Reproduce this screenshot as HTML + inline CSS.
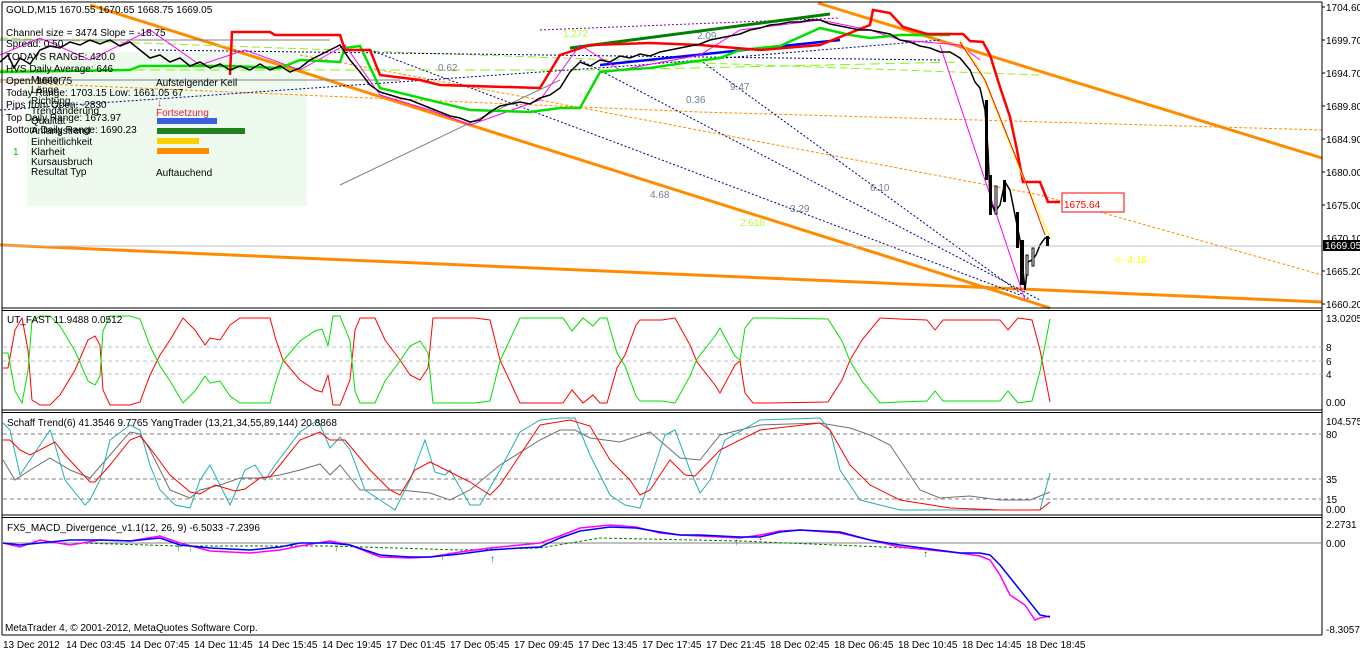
<!DOCTYPE html>
<html><head><meta charset="utf-8"><style>
body{margin:0;background:#fff;width:1360px;height:652px;overflow:hidden;font-family:"Liberation Sans",sans-serif}
svg text{font-family:"Liberation Sans",sans-serif;font-size:10px}
</style></head><body>
<svg width="1360" height="652" viewBox="0 0 1360 652" xmlns="http://www.w3.org/2000/svg">
<rect width="1360" height="652" fill="#fff"/>
<rect x="27" y="52" width="280" height="154" fill="#effaef"/>
<g fill="none">
<polyline points="0,82 300,95 700,112 1322,130" stroke="#ff8c00" stroke-dasharray="3,2" stroke-width="1"/>
<polyline points="300,55 540,100 1040,195 1322,275" stroke="#ff8c00" stroke-dasharray="3,2" stroke-width="1"/>
<polyline points="0,245 1322,302" stroke="#ff8c00" stroke-width="3"/>
<polyline points="90,5 1050,308" stroke="#ff8c00" stroke-width="3"/>
<polyline points="818,3 1322,158" stroke="#ff8c00" stroke-width="3"/>
<polyline points="0,38 1040,75" stroke="#90ee20" stroke-dasharray="8,4" stroke-width="1"/>
<polyline points="0,70 600,70 960,62" stroke="#7cfc00" stroke-dasharray="10,5" stroke-width="1"/>
<polyline points="0,40 330,40" stroke="#808080"/>
<polyline points="0,80 400,80" stroke="#808080"/>
<polyline points="540,30 840,18" stroke="#800080" stroke-dasharray="2,2"/>
<polyline points="570,48 830,14" stroke="#008000" stroke-width="3"/>
<polyline points="600,65 840,40" stroke="#0000ff" stroke-width="2.5"/>
<polyline points="370,50 1020,295" stroke="#000080" stroke-dasharray="2,2"/>
<polyline points="580,60 1040,300" stroke="#000080" stroke-dasharray="2,2"/>
<polyline points="700,60 1030,300" stroke="#000080" stroke-dasharray="2,2"/>
<polyline points="0,110 640,65 940,40" stroke="#000080" stroke-dasharray="2,2"/>
<polyline points="150,50 940,60" stroke="#000080" stroke-dasharray="2,2"/>
<polyline points="340,185 560,80" stroke="#808080"/>
<polyline points="940,45 1025,300" stroke="#ff00ff"/>
<polyline points="0,55 40,38 90,60 150,30 200,65 245,50 300,70 345,45 380,95 430,110 470,125 540,100 580,45 620,70 700,55 740,30 820,20 870,30 900,40 960,45 980,60" stroke="#ff00ff"/>
<polyline points="0,72 130,70 140,66 230,66 280,68 300,60 340,62 345,48 360,46 380,88 470,110 530,112 560,108 580,108 600,72 620,70 650,68 690,62 720,58 740,50 780,46 820,28 850,35 870,38 900,35 950,35" stroke="#00e000" stroke-width="2.5"/>
<polyline points="230,75 232,32 270,32 275,35 340,35 345,50 370,50 380,75 420,80 440,85 540,88 560,55 590,45 650,43 700,45 760,50 820,45 870,25 873,10 890,13 903,27 927,34 963,34 970,41 983,42 990,55 1000,87 1010,117 1017,150 1023,182 1040,182 1048,202 1060,202" stroke="#ff0000" stroke-width="2.5"/>
<polyline points="960,40 980,70 1000,120 1020,170 1040,215 1050,237" stroke="#ffff00"/>
<polyline points="960,42 985,80 1005,130 1025,180 1045,235" stroke="#ff0000"/>
<polyline points="0,62 8,55 14,68 20,58 30,64 40,50 50,46 60,48 70,42 80,45 90,40 100,44 110,40 120,46 130,42 140,50 150,58 160,55 170,62 180,58 190,66 200,62 210,68 220,64 230,70 240,66 250,70 260,64 270,70 280,66 290,72 300,68 310,60 320,55 330,50 340,45 350,60 360,72 370,85 380,92 390,95 400,98 410,100 420,104 430,108 440,112 450,116 460,118 470,122 480,120 490,112 500,106 510,104 520,102 530,104 540,98 550,95 560,88 570,72 580,62 590,66 600,60 610,62 620,56 630,58 640,54 650,56 660,52 670,50 680,48 690,46 700,44 710,40 720,38 730,36 740,34 750,30 760,28 770,25 780,24 790,22 800,22 810,20 820,20 830,24 840,26 850,28 860,30 870,30 880,32 890,34 900,40 910,42 920,46 930,48 940,52 950,52 960,58 970,70 975,82 980,88 985,110 988,150 990,200 995,212 1000,205 1005,182 1010,190 1015,215 1020,240 1025,290 1028,262 1032,260 1036,255 1040,245 1045,238 1050,238" stroke="#000" stroke-width="1.5"/>
<polyline points="0,246 1322,246" stroke="#c0c0c0"/>
</g>
<g fill="#000">
<rect x="985" y="100" width="3" height="80"/><rect x="989" y="175" width="3" height="40"/><rect x="1016" y="212" width="3" height="36"/><rect x="1020" y="240" width="4" height="45"/>
<rect x="1026" y="255" width="2" height="20" fill="#fff" stroke="#000"/><rect x="1032" y="248" width="2" height="18" fill="#fff" stroke="#000"/><rect x="1046" y="236" width="3" height="10"/>
<rect x="995" y="186" width="2" height="28" fill="#fff" stroke="#000"/><rect x="1003" y="180" width="3" height="22"/>
</g>
<g fill="#000">
<text x="6" y="13">GOLD,M15  1670.55 1670.65 1668.75 1669.05</text>
<text x="6" y="36">Channel size = 3474 Slope = -18.75</text>
<text x="6" y="47">Spread: 0.50</text>
<text x="6" y="60">TODAYS RANGE: 420.0</text>
<text x="6" y="72">HVS Daily Average: 646</text>
<text x="6" y="84">Open: 1669.75</text>
<text x="6" y="96">Today Range: 1703.15  Low: 1661.05 67</text>
<text x="6" y="108">Pips from Open: -2830</text>
<text x="6" y="121">Top Daily Range: 1673.97</text>
<text x="6" y="133">Bottom Daily Range: 1690.23</text>
<text x="31" y="83">Muster</text><text x="31" y="93">Länge</text>
<text x="31" y="104">Richtung</text><text x="31" y="114">Trendänderung</text>
<text x="31" y="124">Qualität</text><text x="31" y="134">Anfangstrend</text>
<text x="31" y="145">Einheitlichkeit</text><text x="31" y="155">Klarheit</text>
<text x="31" y="165">Kursausbruch</text><text x="31" y="175">Resultat Typ</text>
<text x="156" y="86">Aufsteigender Keil</text>
<text x="156" y="176">Auftauchend</text>
</g>
<text x="156" y="116" fill="#e0204a">Fortsetzung</text>
<text x="157" y="106" fill="#e0204a" font-size="13">↓</text>
<text x="13" y="155" fill="#00c000" font-size="12">1</text>
<g><rect x="157" y="118" width="60" height="6" fill="#3a60e0"/><rect x="157" y="128" width="88" height="6" fill="#208020"/><rect x="157" y="138" width="42" height="6" fill="#ffd000"/><rect x="157" y="148" width="52" height="6" fill="#ff8c00"/></g>
<g fill="#708090"><text x="650" y="198">4.68</text><text x="790" y="212">3.29</text><text x="870" y="191">6.10</text><text x="697" y="39">2.09</text><text x="438" y="71">0.62</text><text x="686" y="103">0.36</text><text x="730" y="90">9.47</text></g>
<text x="740" y="226" fill="#adff2f">2.618</text><text x="563" y="37" fill="#adff2f">1.272</text>
<rect x="1062" y="193" width="62" height="19" fill="#fff" stroke="#ff0000"/>
<text x="1064" y="208" fill="#ff0000" font-size="15">1675.64</text>
<text x="1115" y="263" fill="#ffff00" font-size="16">&lt;--4:16</text>
<g fill="none" stroke="#000">
<line x1="2" y1="2" x2="1322" y2="2"/><line x1="2" y1="2" x2="2" y2="635"/><line x1="1322" y1="2" x2="1322" y2="635"/>
<line x1="2" y1="308" x2="1322" y2="308"/><line x1="2" y1="310.5" x2="1322" y2="310.5"/>
<line x1="2" y1="410" x2="1322" y2="410"/><line x1="2" y1="412.5" x2="1322" y2="412.5"/>
<line x1="2" y1="515" x2="1322" y2="515"/><line x1="2" y1="517.5" x2="1322" y2="517.5"/>
<line x1="2" y1="635" x2="1322" y2="635"/>
</g>
<g fill="none" stroke="#c0c0c0" stroke-dasharray="4,3"><line x1="3" y1="347" x2="1322" y2="347"/><line x1="3" y1="361" x2="1322" y2="361"/><line x1="3" y1="374" x2="1322" y2="374"/></g>
<g fill="none">
<polyline stroke="#ff0000" points="3,368 8,368 15,330 22,318 28,350 32,400 40,405 50,405 60,395 75,370 88,340 95,336 100,345 103,390 110,405 130,405 140,402 150,375 160,355 170,340 183,318 195,330 205,345 210,338 220,340 230,325 240,318 270,318 276,340 283,360 300,380 315,390 322,392 328,375 333,405 340,405 350,380 355,330 360,318 375,318 385,340 400,360 410,375 420,380 428,368 433,318 460,318 475,318 490,320 500,360 520,403 563,403 572,390 583,403 593,395 600,403 607,403 617,368 625,355 636,325 640,320 662,320 675,318 690,345 697,362 715,385 720,393 735,365 740,361 745,393 753,403 770,403 828,402 842,380 850,360 862,340 880,318 900,319 927,320 935,330 943,320 965,320 1000,320 1008,330 1018,318 1032,320 1040,350 1050,402"/>
<polyline stroke="#00e000" transform="translate(0,721) scale(1,-1)" points="3,368 8,368 15,330 22,318 28,350 32,400 40,405 50,405 60,395 75,370 88,340 95,336 100,345 103,390 110,405 130,405 140,402 150,375 160,355 170,340 183,318 195,330 205,345 210,338 220,340 230,325 240,318 270,318 276,340 283,360 300,380 315,390 322,392 328,375 333,405 340,405 350,380 355,330 360,318 375,318 385,340 400,360 410,375 420,380 428,368 433,318 460,318 475,318 490,320 500,360 520,403 563,403 572,390 583,403 593,395 600,403 607,403 617,368 625,355 636,325 640,320 662,320 675,318 690,345 697,362 715,385 720,393 735,365 740,361 745,393 753,403 770,403 828,402 842,380 850,360 862,340 880,318 900,319 927,320 935,330 943,320 965,320 1000,320 1008,330 1018,318 1032,320 1040,350 1050,402"/>
</g>
<text x="7" y="323">UT_FAST 11.9488 0.0512</text>
<g fill="none" stroke="#808080" stroke-dasharray="4,3"><line x1="3" y1="434" x2="1322" y2="434"/><line x1="3" y1="479" x2="1322" y2="479"/><line x1="3" y1="499" x2="1322" y2="499"/></g>
<g fill="none">
<polyline stroke="#707070" points="3,460 15,480 30,470 50,458 70,470 90,478 110,455 130,432 140,434 150,450 170,490 190,498 200,490 220,485 240,478 260,478 280,475 300,470 320,464 330,475 340,465 360,490 400,490 430,493 450,500 470,490 500,465 540,440 560,430 575,430 590,438 620,442 650,432 680,458 700,460 720,435 760,425 820,423 850,428 870,435 890,445 900,460 920,490 940,498 970,496 1000,500 1030,500 1050,492"/>
<polyline stroke="#20b0b0" points="3,423 10,430 20,475 40,445 50,430 55,445 65,480 85,505 90,500 100,480 110,440 130,425 140,430 150,465 160,490 175,505 190,508 200,480 210,465 230,505 245,470 255,465 265,480 275,465 300,432 318,420 330,448 340,437 350,450 365,490 395,510 410,480 425,440 435,472 445,475 450,470 470,505 480,505 500,470 520,432 540,420 560,418 575,418 590,455 610,495 625,505 640,508 650,480 665,435 675,430 690,470 700,493 710,480 725,440 760,420 820,418 830,430 840,470 860,500 900,510 1000,510 1040,510 1050,473"/>
<polyline stroke="#ff0000" points="3,440 10,440 20,450 30,455 55,442 65,455 90,482 95,482 110,465 130,440 140,436 150,448 170,475 190,492 200,494 215,485 235,491 245,489 260,478 270,477 280,465 300,440 320,432 330,440 345,440 370,470 390,490 400,495 415,470 430,462 450,472 470,482 490,495 500,485 520,455 540,425 570,420 590,426 610,460 630,480 640,495 650,490 670,460 685,475 695,476 720,450 760,430 820,423 830,430 850,465 870,485 900,500 950,508 1000,510 1040,510 1050,502"/>
</g>
<text x="7" y="426">Schaff Trend(6) 41.3546 9.7765  YangTrader (13,21,34,55,89,144) 20.8868</text>
<line x1="3" y1="543" x2="1322" y2="543" stroke="#808080"/>
<g fill="none">
<polyline stroke="#008000" stroke-dasharray="3,2" points="80,543 180,546 330,546 460,550 540,548 600,538 740,541 930,549"/>
<polyline stroke="#ff00ff" stroke-width="1.5" points="3,543 20,547 40,540 70,545 100,540 130,541 160,536 180,543 210,551 250,553 280,550 300,546 330,541 350,545 380,557 410,558 430,557 460,552 490,548 520,545 540,543 560,536 580,528 610,525 636,527 660,533 680,535 700,536 740,538 760,535 780,531 800,530 840,533 870,540 900,547 930,550 960,553 980,556 990,560 1000,575 1010,595 1025,605 1035,620 1040,618 1050,616"/>
<polyline stroke="#0000ff" stroke-width="1.5" points="3,543 20,545 40,543 70,540 100,540 130,541 160,538 180,545 210,548 250,550 280,547 300,543 330,543 350,545 380,555 410,557 430,557 460,554 490,550 520,548 540,547 560,538 580,531 610,527 636,528 660,532 680,535 700,535 740,537 760,537 780,532 800,530 840,532 870,540 900,545 930,549 960,553 980,553 990,555 1000,565 1020,590 1040,615 1050,617"/>
</g>
<g fill="#008000" font-size="11" font-weight="bold"><text x="176" y="551">↑</text><text x="188" y="551">↑</text><text x="334" y="551">↑</text><text x="440" y="560">↑</text><text x="490" y="562">↑</text><text x="734" y="545">↑</text><text x="923" y="557">↑</text></g>
<text x="758" y="540" fill="#ff0000" font-size="11" font-weight="bold">↓</text>
<text x="7" y="531">FX5_MACD_Divergence_v1.1(12, 26, 9) -6.5033 -7.2396</text>
<text x="5" y="631" font-size="11">MetaTrader 4, © 2001-2012, MetaQuotes Software Corp.</text>
<g fill="#000">
<text x="1326" y="11">1704.60</text><text x="1326" y="44">1699.70</text><text x="1326" y="77">1694.70</text><text x="1326" y="110">1689.80</text><text x="1326" y="143">1684.90</text><text x="1326" y="176">1680.00</text><text x="1326" y="209">1675.00</text><text x="1326" y="242">1670.10</text><text x="1326" y="275">1665.20</text><text x="1326" y="308">1660.20</text>
<text x="1326" y="322">13.0205</text><text x="1326" y="351">8</text><text x="1326" y="365">6</text><text x="1326" y="378">4</text><text x="1326" y="406">0.00</text>
<text x="1326" y="425">104.5758</text><text x="1326" y="438">80</text><text x="1326" y="483">35</text><text x="1326" y="503">15</text><text x="1326" y="513">0.00</text>
<text x="1326" y="528">2.2731</text><text x="1326" y="547">0.00</text><text x="1326" y="633">-8.3057</text>
</g>
<rect x="1323" y="240" width="37" height="11" fill="#000"/><text x="1325" y="249" fill="#fff">1669.05</text>
<g stroke="#000"><line x1="1322" y1="7" x2="1325" y2="7"/><line x1="1322" y1="40" x2="1325" y2="40"/><line x1="1322" y1="73" x2="1325" y2="73"/><line x1="1322" y1="106" x2="1325" y2="106"/><line x1="1322" y1="139" x2="1325" y2="139"/><line x1="1322" y1="172" x2="1325" y2="172"/><line x1="1322" y1="205" x2="1325" y2="205"/><line x1="1322" y1="271" x2="1325" y2="271"/><line x1="1322" y1="304" x2="1325" y2="304"/></g>
<g fill="#000">
<text x="3" y="648">13 Dec 2012</text><text x="66" y="648">14 Dec 03:45</text><text x="130" y="648">14 Dec 07:45</text><text x="194" y="648">14 Dec 11:45</text><text x="258" y="648">14 Dec 15:45</text><text x="322" y="648">14 Dec 19:45</text><text x="386" y="648">17 Dec 01:45</text><text x="450" y="648">17 Dec 05:45</text><text x="514" y="648">17 Dec 09:45</text><text x="578" y="648">17 Dec 13:45</text><text x="642" y="648">17 Dec 17:45</text><text x="706" y="648">17 Dec 21:45</text><text x="770" y="648">18 Dec 02:45</text><text x="834" y="648">18 Dec 06:45</text><text x="898" y="648">18 Dec 10:45</text><text x="962" y="648">18 Dec 14:45</text><text x="1026" y="648">18 Dec 18:45</text>
</g>
</svg>
</body></html>
